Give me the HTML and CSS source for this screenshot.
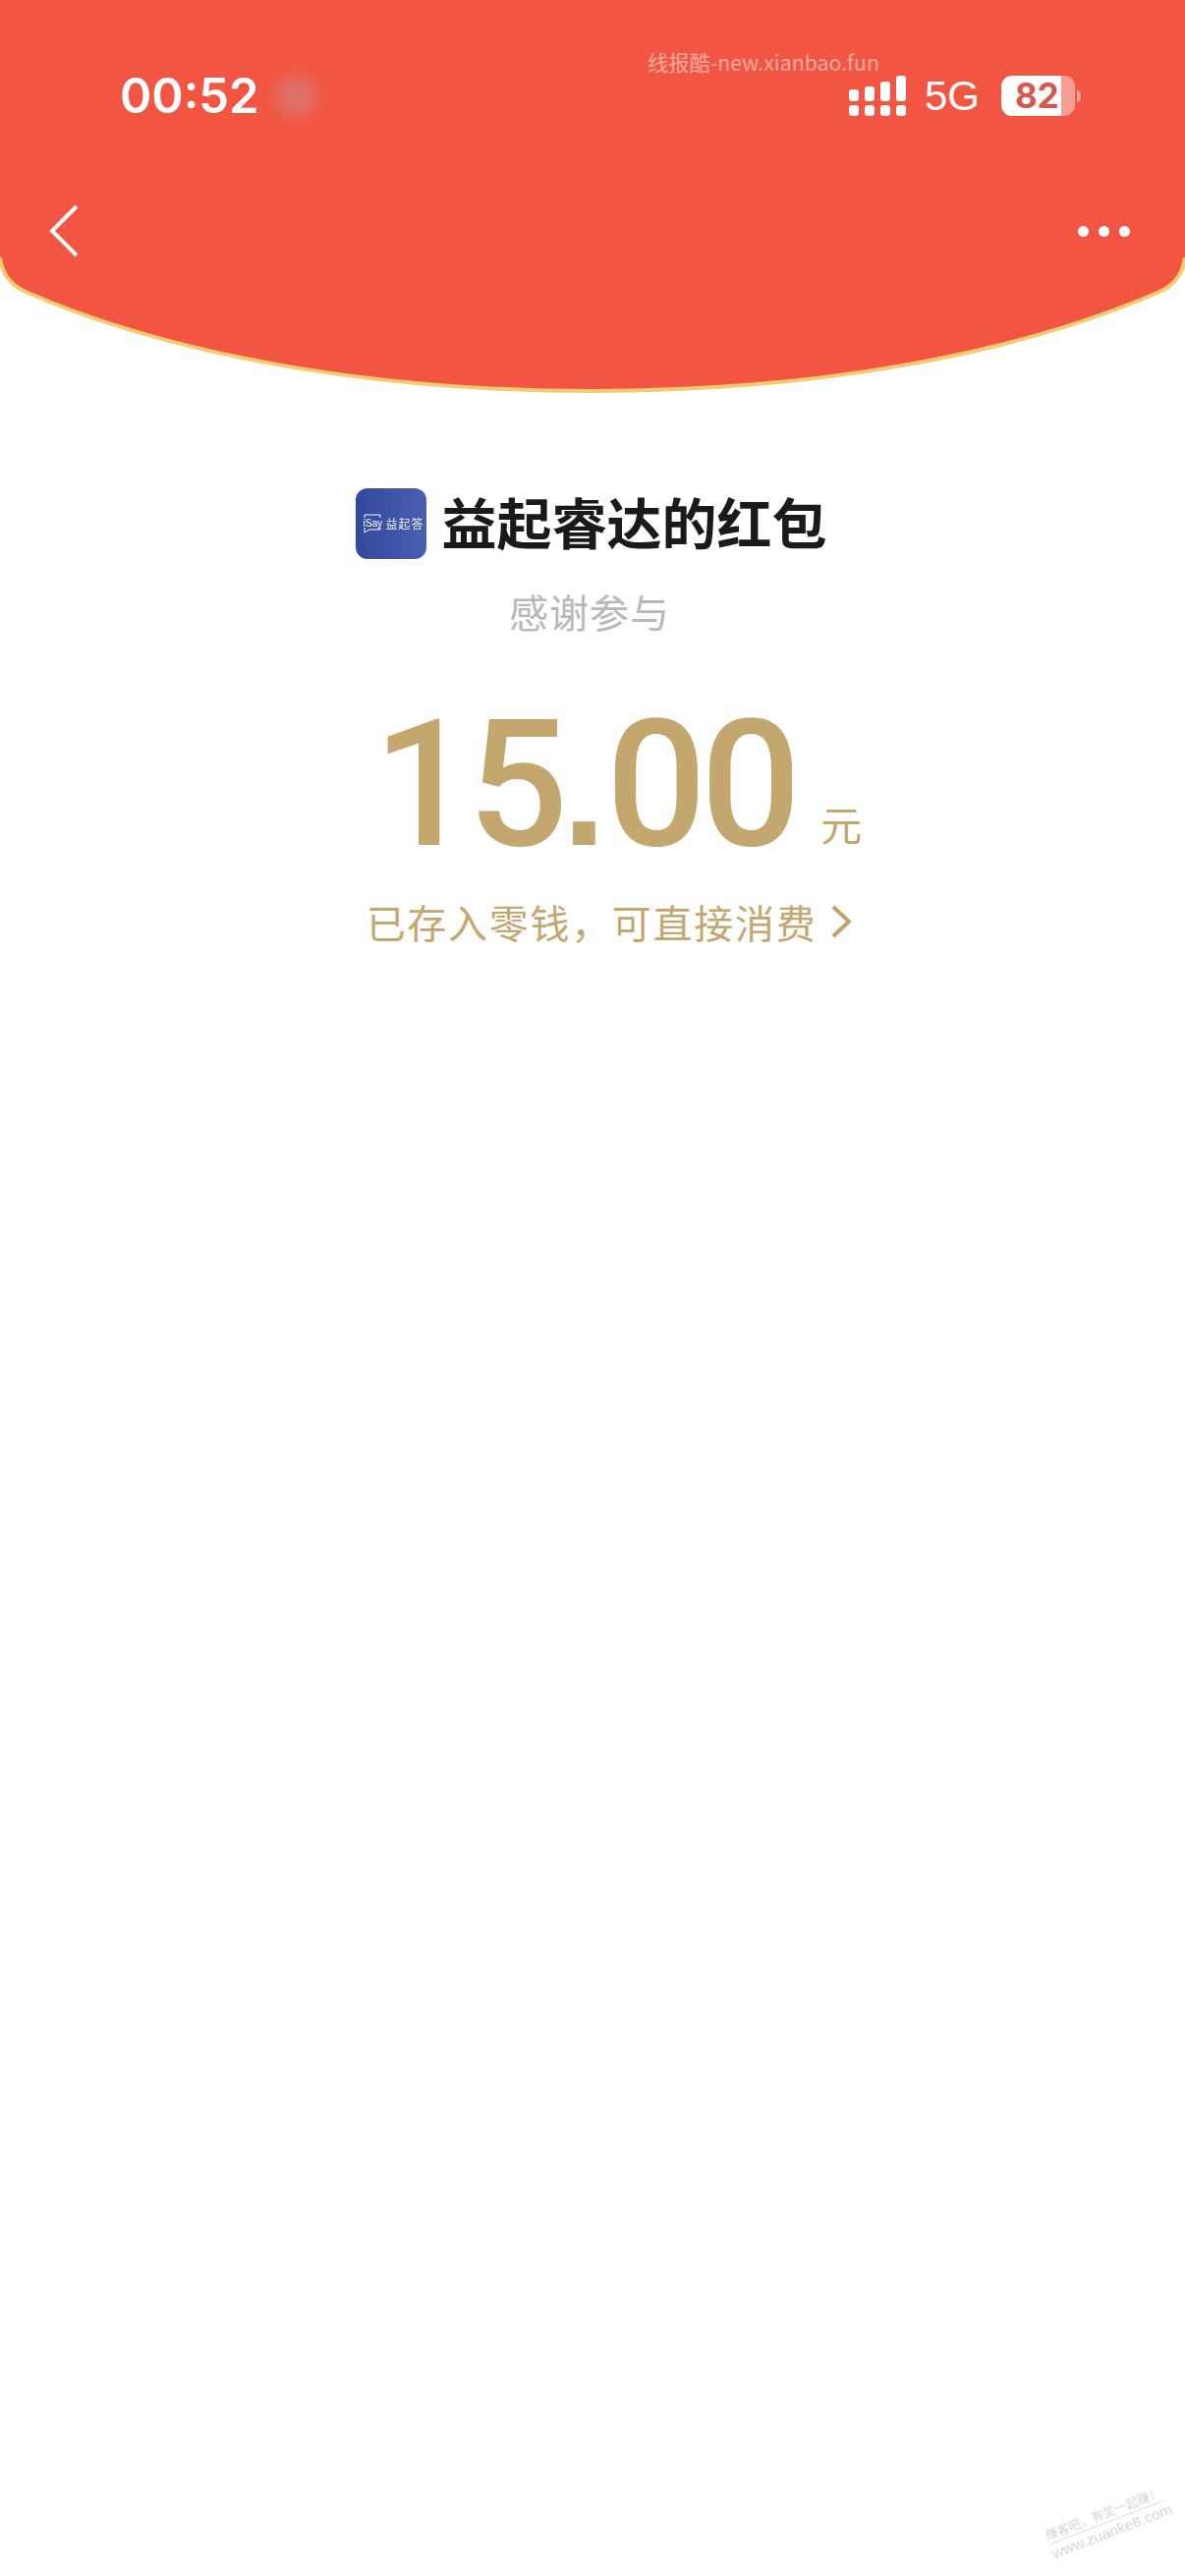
FILE: index.html
```html
<!DOCTYPE html>
<html lang="zh-CN">
<head>
  <meta charset="UTF-8" />
  <meta name="viewport" content="width=device-width, initial-scale=1.0" />
  <title>益起睿达的红包</title>
  <link rel="stylesheet" href="styles.css">
</head>
<body>
  <div class="page">
    <header class="hero">
      <svg class="hero-bg" width="1206" height="404" viewBox="0 0 1206 404">
        <path d="M0 262 C2 278 10 290 26 297 C175 362 380 398 603 398 C826 398 1031 362 1180 297 C1196 290 1204 278 1206 262 V0 H0 Z" fill="#f25642" />
        <path d="M0 262 C2 278 10 290 26 297 C175 362 380 398 603 398 C826 398 1031 362 1180 297 C1196 290 1204 278 1206 262" fill="none" stroke="#f3cb70" stroke-width="4" />
      </svg>

      <div class="status-bar">
        <div class="status-left">
          <span class="time">00:52</span>
          <span class="blur-dot"></span>
        </div>
        <div class="status-right">
          <svg class="signal" width="58" height="41" viewBox="0 0 58 41" fill="#fff">
            <rect x="0" y="14" width="10" height="12" rx="3" />
            <rect x="16" y="11" width="10" height="15" rx="3" />
            <rect x="32" y="6" width="10" height="20" rx="3" />
            <rect x="48" y="0" width="10" height="26" rx="3" />
            <rect x="0" y="30" width="10" height="11" rx="3" />
            <rect x="16" y="30" width="10" height="11" rx="3" />
            <rect x="32" y="30" width="10" height="11" rx="3" />
            <rect x="48" y="30" width="10" height="11" rx="3" />
          </svg>
          <span class="net">5G</span>
          <div class="battery">
            <div class="battery-body"><span class="battery-level">82</span></div>
            <span class="battery-tip"></span>
          </div>
        </div>
      </div>

      <div class="mark-top">线报酷-new.xianbao.fun</div>

      <nav class="nav">
        <svg width="30" height="54" viewBox="0 0 30 54" fill="none" stroke="#fff" stroke-width="4">
          <path d="M28 2 L3 27 L28 52" />
        </svg>
        <div class="dots"><i></i><i></i><i></i></div>
      </nav>
    </header>

    <main class="content">
      <div class="title-row">
        <div class="logo">
          <svg width="20" height="22" viewBox="0 0 20 22" fill="none" stroke="#fff" stroke-width="1">
            <path d="M2 5 V2 H18 V5 M2 15 V20 L7 17 H18 V15" />
          </svg>
          <span class="logo-say">iSay</span>
          <span class="logo-name">益起答</span>
        </div>
        <h1 class="title">益起睿达的红包</h1>
      </div>
      <p class="subtitle">感谢参与</p>
      <div class="amount-row">
        <span class="amount">15<span class="amount-dot">.</span>00</span>
        <span class="unit">元</span>
      </div>
      <div class="note-row">
        <span class="note">已存入零钱，可直接消费</span>
        <svg width="20" height="34" viewBox="0 0 20 34" fill="none" stroke="#c0a169" stroke-width="4">
          <path d="M2 2 L18 17 L2 32" />
        </svg>
      </div>
    </main>

    <div class="mark-bottom">
      <div class="mark-cn">赚客吧，有奖一起赚！</div>
      <div class="mark-en">www.zuanke8.com</div>
    </div>
  </div>
</body>
</html>
```

FILE: styles.css
```css
body {
  margin: 0;
  background: #fff;
  font-family: "Noto Sans CJK SC", "Noto Sans", sans-serif;
}

.page {
  position: relative;
  width: 1206px;
  height: 2622px;
  overflow: hidden;
}

.hero {
  position: relative;
  height: 404px;
  box-sizing: border-box;
  padding-top: 77px;
}

.hero-bg {
  position: absolute;
  top: 0;
  left: 0;
}

.status-bar {
  position: relative;
  display: flex;
  justify-content: space-between;
  align-items: center;
  height: 41px;
  padding: 0 106px 0 122px;
  color: #fff;
}

.status-left {
  display: flex;
  align-items: center;
  gap: 16px;
}

.time {
  font-family: Inter, sans-serif;
  font-size: 49px;
  font-weight: 600;
  line-height: 41px;
}

.blur-dot {
  width: 40px;
  height: 40px;
  margin-left: 2px;
  border-radius: 50%;
  background: #dc746e;
  filter: blur(9px);
}

.status-right {
  display: flex;
  align-items: center;
}

.net {
  margin: 0 22px 0 19px;
  font-family: "Liberation Sans", sans-serif;
  font-size: 42px;
  line-height: 41px;
}

.battery {
  display: flex;
  align-items: center;
  gap: 2px;
}

.battery-body {
  width: 75px;
  height: 41px;
  box-sizing: border-box;
  border-radius: 11px;
  background: linear-gradient(to right, #fff 81%, #f79d96 81%);
  padding-left: 14px;
}

.battery-level {
  font-family: Inter, sans-serif;
  font-size: 35px;
  font-weight: 700;
  line-height: 41px;
  color: #d5594e;
}

.battery-tip {
  width: 4px;
  height: 12px;
  border-radius: 0 6px 6px 0;
  background: #f79d96;
}

.mark-top {
  position: absolute;
  top: 48px;
  left: 659px;
  font-size: 21.3px;
  line-height: 30px;
  color: rgba(255, 255, 255, 0.5);
}

.nav {
  position: relative;
  display: flex;
  justify-content: space-between;
  align-items: center;
  margin-top: 90px;
  padding: 0 56px 0 50px;
}

.dots {
  display: flex;
  gap: 10px;
}

.dots i {
  width: 11px;
  height: 11px;
  border-radius: 50%;
  background: #fff;
}

.content {
  display: flex;
  flex-direction: column;
  align-items: center;
  padding-top: 93px;
}

.title-row {
  display: flex;
  align-items: center;
  gap: 16px;
  height: 72px;
  margin-left: -3px;
}

.logo {
  display: flex;
  align-items: center;
  justify-content: center;
  position: relative;
  width: 72px;
  height: 72px;
  border-radius: 12px;
  background: linear-gradient(to right, #33479b, #4a5fb3);
  color: #fff;
  font-size: 11px;
  line-height: 14px;
}

.logo svg {
  position: absolute;
  top: 25px;
  left: 7px;
}

.logo-say {
  position: absolute;
  top: 29px;
  left: 8px;
  font-family: "Liberation Sans", sans-serif;
  font-size: 10px;
}

.logo-name {
  position: absolute;
  top: 29px;
  left: 31px;
  font-size: 12px;
  letter-spacing: 1px;
  white-space: nowrap;
  opacity: 0.9;
}

.title {
  margin: 0;
  padding-bottom: 6px;
  font-size: 56px;
  font-weight: 700;
  line-height: 66px;
  color: #1a1a1a;
}

.subtitle {
  margin: 0;
  margin-top: 25px;
  margin-left: -6px;
  font-size: 40px;
  line-height: 56px;
  letter-spacing: 1px;
  color: #b8b8b8;
}

.amount-row {
  display: flex;
  align-items: flex-end;
  gap: 26px;
  margin-top: 69px;
  margin-left: 51px;
  color: #c4a66f;
}

.amount {
  font-family: Roboto, sans-serif;
  font-size: 180px;
  font-weight: 500;
  line-height: 160px;
  letter-spacing: -6px;
}

.amount-dot {
  font-family: "Liberation Sans", sans-serif;
  font-size: 160px;
  font-weight: 700;
  letter-spacing: 0;
}

.unit {
  font-size: 42px;
  line-height: 50px;
  margin-bottom: 22px;
}

.note-row {
  display: flex;
  align-items: center;
  gap: 15px;
  margin-top: 25px;
  margin-left: 33px;
  color: #c4a66f;
}

.note {
  font-size: 40px;
  line-height: 56px;
  letter-spacing: 1.7px;
}

.mark-bottom {
  position: absolute;
  top: 2549px;
  left: 1064px;
  width: 125px;
  transform: rotate(-21deg);
  color: #d4d4d4;
  filter: blur(0.7px);
  text-align: center;
}

.mark-cn {
  font-size: 12.5px;
  line-height: 18px;
  border-bottom: 1px solid #dcdcdc;
  white-space: nowrap;
}

.mark-en {
  font-family: "Liberation Sans", sans-serif;
  font-size: 15.5px;
  line-height: 20px;
  white-space: nowrap;
}
```
